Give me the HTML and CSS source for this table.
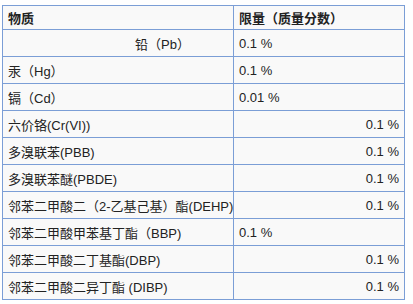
FILE: index.html
```html
<!DOCTYPE html>
<html lang="zh">
<head>
    <meta charset="UTF-8">
    <meta name="viewport" content="width=device-width, initial-scale=1.0">
    <title>限量</title>
    <link rel="stylesheet" href="styles.css">
</head>
<body>

    <!-- 有害物质限量表 -->
    <table class="limits">
        <colgroup>
            <col class="col-name">
            <col class="col-limit">
        </colgroup>
        <tr class="head">
            <th>物质</th>
            <th>限量（质量分数）</th>
        </tr>
        <tr>
            <td class="shifted">铅（Pb）</td>
            <td>0.1 %</td>
        </tr>
        <tr>
            <td>汞（Hg）</td>
            <td>0.1 %</td>
        </tr>
        <tr>
            <td>镉（Cd）</td>
            <td>0.01 %</td>
        </tr>
        <tr>
            <td>六价铬(Cr(VI))</td>
            <td class="num">0.1 %</td>
        </tr>
        <tr>
            <td>多溴联苯(PBB)</td>
            <td class="num">0.1 %</td>
        </tr>
        <tr>
            <td>多溴联苯醚(PBDE)</td>
            <td class="num">0.1 %</td>
        </tr>
        <tr>
            <td>邻苯二甲酸二（2-乙基己基）酯(DEHP)</td>
            <td class="num">0.1 %</td>
        </tr>
        <tr>
            <td>邻苯二甲酸甲苯基丁酯（BBP)</td>
            <td>0.1 %</td>
        </tr>
        <tr>
            <td>邻苯二甲酸二丁基酯(DBP)</td>
            <td class="num">0.1 %</td>
        </tr>
        <tr>
            <td>邻苯二甲酸二异丁酯 (DIBP)</td>
            <td class="num">0.1 %</td>
        </tr>
    </table>

</body>
</html>
```

FILE: styles.css
```css
body {
    margin: 0;
    padding: 5px 0 0 2px;
    background-color: #fff;
    font-family: "Liberation Sans", "Noto Sans CJK SC", sans-serif;
    font-size: 13px;
    color: #222;
}
.limits {
    border-collapse: collapse;
    table-layout: fixed;
    width: 403px;
    background-color: #f9f9f9;
    border: 1px solid #7b9ed6;
}
.col-name {
    width: 231px;
}
.limits th,
.limits td {
    border: 1px solid #7b9ed6;
    padding: 0 5px;
    height: 26px;
    text-align: left;
    white-space: nowrap;
    overflow: hidden;
}
.limits .head th {
    height: 23px;
    font-weight: bold;
}
.limits td.shifted {
    padding-left: 132px;
}
.limits td.num {
    text-align: right;
}
```
